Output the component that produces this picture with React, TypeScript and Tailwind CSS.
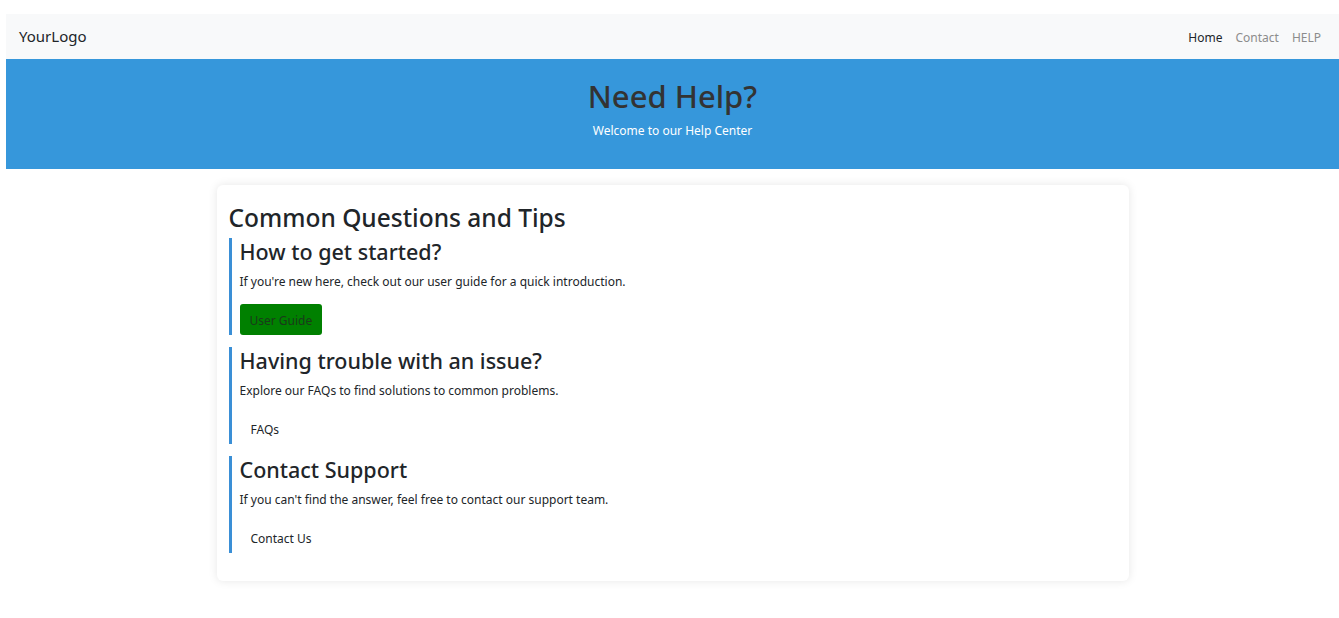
const sections = [
  {
    title: 'How to get started?',
    text: "If you're new here, check out our user guide for a quick introduction.",
    label: 'User Guide',
    green: true,
  },
  {
    title: 'Having trouble with an issue?',
    text: 'Explore our FAQs to find solutions to common problems.',
    label: 'FAQs',
    green: false,
  },
  {
    title: 'Contact Support',
    text: "If you can't find the answer, feel free to contact our support team.",
    label: 'Contact Us',
    green: false,
  },
];

export default function App() {
  return (
    <div className="min-h-screen bg-white pt-[14px] pl-[6px] font-['Noto_Sans',sans-serif] text-[#212529]">
      {/* Navbar */}
      <nav className="h-[45px] bg-[#f8f9fa] flex items-center justify-between pl-[13px] pr-[18px]">
        <span className="text-[15px] text-[#212529]">YourLogo</span>
        <div className="flex gap-[13px] text-[12px] mt-[3px]">
          <a className="text-[#212529]">Home</a>
          <a className="text-[#8c8c8c]">Contact</a>
          <a className="text-[#8c8c8c]">HELP</a>
        </div>
      </nav>

      {/* Hero */}
      <header className="h-[110px] bg-[#3697db] flex flex-col items-center pt-[17px]">
        <h1 className="text-[31px] leading-[40px] font-medium text-[#333333]">Need Help?</h1>
        <p className="text-[12px] text-white mt-[6px]">Welcome to our Help Center</p>
      </header>

      {/* Card */}
      <main className="flex justify-center pt-[16px]">
        <div className="w-[912px] bg-white rounded-md shadow-[0_0_10px_rgba(0,0,0,0.1)] pt-[16px] pb-[28px] px-[12px]">
          <h2 className="text-[24.5px] leading-[34px] font-medium text-[#212529] mb-[3px]">
            Common Questions and Tips
          </h2>
          <div className="flex flex-col gap-[12px]">
            {sections.map((s) => (
              <section key={s.title} className="border-l-[3px] border-[#3a8fd6] pl-[8px]">
                <h3 className="text-[21.5px] leading-[28px] font-medium text-[#212529]">{s.title}</h3>
                <p className="text-[12px] leading-[20px] mt-[6px]">{s.text}</p>
                <button
                  className={
                    s.green
                      ? 'mt-[12px] h-[31px] pt-[2px] px-[10px] rounded-[3px] bg-[#008000] text-[12px] text-[#1a3a1a]'
                      : 'mt-[12px] h-[31px] pt-[3px] px-[11px] text-[12px] text-[#212529]'
                  }
                >
                  {s.label}
                </button>
              </section>
            ))}
          </div>
        </div>
      </main>
    </div>
  );
}
